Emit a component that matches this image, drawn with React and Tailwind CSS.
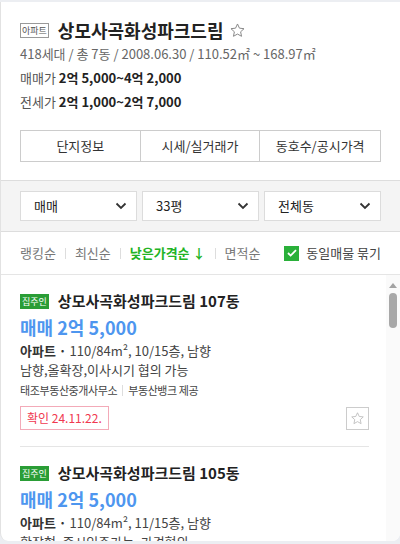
import React from 'react';

const font = { fontFamily: '"Noto Sans CJK KR", "Noto Sans", sans-serif' };

const StarIcon = ({ size = 18, color = '#999' }) => (
  <svg width={size} height={size} viewBox="0 0 24 24" fill="none" stroke={color} strokeWidth="1.4" strokeLinejoin="round">
    <path d="M12 2.8l2.75 5.9 6.45.75-4.8 4.4 1.3 6.35L12 17l-5.7 3.2 1.3-6.35-4.8-4.4 6.45-.75z" />
  </svg>
);

const Chevron = () => (
  <svg width="12" height="8" viewBox="0 0 12 8" fill="none" stroke="#333" strokeWidth="1.8">
    <path d="M1.5 1.5l4.5 4.5 4.5-4.5" />
  </svg>
);

const Select = ({ label }) => (
  <div className="flex h-[30px] flex-1 items-center justify-between border border-[#dcdcdc] bg-white pl-[13px] pr-[9px] text-[13px] text-[#222]">
    <span>{label}</span>
    <Chevron />
  </div>
);

const Sep = () => <span className="mx-[9px] h-[11px] w-px bg-[#ddd]" />;

const Card = ({ dong, floor, desc, showFooter }) => (
  <div className="border-b border-[#e5e5e5] pb-[16px] pt-[16px]">
    <div className="flex items-center">
      <span className="mr-[9px] flex h-[15px] items-center bg-[#2a9d36] px-[2px] text-[9px] leading-none text-white">집주인</span>
      <span className="text-[15px] font-bold leading-[20px] text-[#222]">상모사곡화성파크드림 {dong}</span>
    </div>
    <div className="mt-[3px] text-[18px] font-bold leading-[26px] text-[#4e96ef]">매매 2억 5,000</div>
    <div className="mt-[1px] text-[13px] leading-[19px] text-[#444]">
      <span className="font-bold text-[#333]">아파트 · </span>110/84m², {floor}, 남향
    </div>
    <div className="text-[13px] leading-[19px] text-[#444]">{desc}</div>
    {showFooter && (
      <>
        <div className="mt-[2px] flex items-center text-[11px] leading-[18px] tracking-[-0.4px] text-[#444]">
          태조부동산중개사무소<span className="mx-[5px] h-[11px] w-px bg-[#ddd]" />부동산뱅크 제공
        </div>
        <div className="mt-[7px] flex items-center justify-between">
          <span className="flex h-[24px] items-center border border-[#f3aab8] px-[6px] text-[12px] text-[#f0384f]">확인 24.11.22.</span>
          <span className="flex h-[23px] w-[23px] items-center justify-center border border-[#ccc]">
            <StarIcon size={15} color="#bbb" />
          </span>
        </div>
      </>
    )}
  </div>
);

export default function App() {
  return (
    <div className="h-[544px] w-[400px] overflow-hidden bg-[#eceef2] pt-[2px]" style={font}>
      <div className="flex h-[539px] flex-col overflow-hidden rounded-b-[8px] border-l border-[#e2e2e2] bg-white">
        <div className="px-[19px] pt-[16px]">
          <div className="flex items-center">
            <span className="mr-[9px] flex h-[15px] items-center border border-[#999] px-[1px] text-[9px] leading-none text-[#555]">아파트</span>
            <span className="text-[18px] font-bold leading-[24px] text-[#222]">상모사곡화성파크드림</span>
            <span className="ml-[6px]"><StarIcon size={17} color="#888" /></span>
          </div>
          <div className="mt-[3px] text-[13px] leading-[18px] text-[#666]">418세대 / 총 7동 / 2008.06.30 / 110.52㎡ ~ 168.97㎡</div>
          <div className="mt-[5px] text-[13px] leading-[20px] text-[#555]">
            매매가 <span className="font-bold text-[#222]">2억 5,000~4억 2,000</span>
          </div>
          <div className="mt-[4px] text-[13px] leading-[20px] text-[#555]">
            전세가 <span className="font-bold text-[#222]">2억 1,000~2억 7,000</span>
          </div>
          <div className="mt-[18px] grid h-[32px] grid-cols-3 border border-[#ccc] text-[13px] text-[#333]">
            <div className="flex items-center justify-center border-r border-[#ccc]">단지정보</div>
            <div className="flex items-center justify-center border-r border-[#ccc]">시세/실거래가</div>
            <div className="flex items-center justify-center">동호수/공시가격</div>
          </div>
        </div>
        <div className="mt-[18px] flex gap-[5px] border-y border-[#ddd] bg-[#f4f4f4] px-[19px] py-[10px]">
          <Select label="매매" />
          <Select label="33평" />
          <Select label="전체동" />
        </div>
        <div className="flex h-[43px] items-center border-b border-[#e5e5e5] px-[19px] text-[13px] text-[#777]">
          <span>랭킹순</span>
          <Sep />
          <span>최신순</span>
          <Sep />
          <span className="font-bold text-[#22b324]">낮은가격순 ↓</span>
          <Sep />
          <span>면적순</span>
          <div className="ml-auto flex items-center text-[#444]">
            <span className="mr-[7px] flex h-[15px] w-[15px] items-center justify-center bg-[#2ab03a]">
              <svg width="10" height="8" viewBox="0 0 10 8" fill="none" stroke="white" strokeWidth="1.8">
                <path d="M1 4l2.6 2.6L9 1.2" />
              </svg>
            </span>
            동일매물 묶기
          </div>
        </div>
        <div className="flex min-h-0 flex-1">
          <div className="flex-1 overflow-hidden pl-[19px] pr-[17px]">
            <Card dong="107동" floor="10/15층" desc="남향,올확장,이사시기 협의 가능" showFooter />
            <Card dong="105동" floor="11/15층" desc="확장형, 즉시입주가능, 가격협의" />
          </div>
          <div className="flex w-[14px] flex-col items-center bg-[#fafafa] pt-[8px]">
            <svg width="8" height="5" viewBox="0 0 8 5"><path d="M0 5L4 0l4 5z" fill="#a3a3a3" /></svg>
            <div className="mt-[5px] h-[35px] w-[8px] rounded-full bg-[#a8a8a8]" />
          </div>
        </div>
      </div>
    </div>
  );
}
